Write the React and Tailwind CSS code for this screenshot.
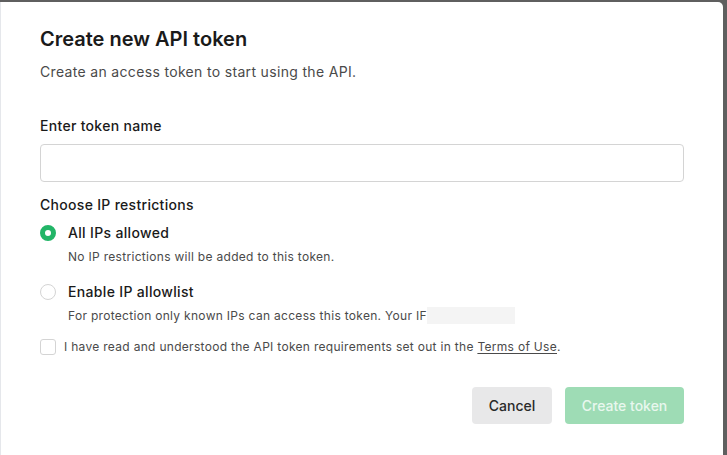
export default function App() {
  return (
    <div className="w-[727px] h-[455px] bg-[#5f5f5f] pt-[2px] pr-[4px] overflow-hidden" style={{ fontFamily: 'Inter, "Noto Sans", sans-serif' }}>
      <div className="h-full bg-white rounded-tr-[5px] border-l border-gray-200 pl-[39px] pr-[39px] pt-[25px] text-[#1a1a1a]">
        {/* Header */}
        <h1 className="text-[20px] leading-[24px] font-semibold">Create new API token</h1>
        <p className="mt-[11px] text-[14px] leading-[20px] tracking-[0.33px] text-[#4a4a4a]">Create an access token to start using the API.</p>

        {/* Token name */}
        <label className="block mt-[34px] text-[14px] leading-[20px] tracking-[0.3px] font-medium">Enter token name</label>
        <input type="text" className="mt-[8px] block w-full h-[38px] rounded-[4px] border border-[#d4d4d4] px-3 text-[14px] outline-none" />

        {/* IP restrictions */}
        <div className="mt-[13px] text-[14px] leading-[20px] tracking-[0.3px] font-medium">Choose IP restrictions</div>

        <div className="mt-[8px] flex items-start gap-[12px]">
          <span className="mt-[2px] w-[16px] h-[16px] rounded-full border-[5px] border-[#22b567] bg-white shrink-0" />
          <div>
            <div className="text-[14px] leading-[20px] tracking-[0.33px] font-medium">All IPs allowed</div>
            <div className="mt-[6px] text-[12px] leading-[16px] tracking-[0.3px] text-[#4a4a4a]">No IP restrictions will be added to this token.</div>
          </div>
        </div>

        <div className="mt-[17px] flex items-start gap-[12px]">
          <span className="mt-[2px] w-[16px] h-[16px] rounded-full border border-[#d4d4d4] bg-white shrink-0" />
          <div>
            <div className="text-[14px] leading-[20px] tracking-[0.33px] font-medium">Enable IP allowlist</div>
            <div className="mt-[5px] flex items-center text-[12px] leading-[16px] tracking-[0.3px] text-[#4a4a4a]">
              <span>For protection only known IPs can access this token. Your IF</span>
              <span className="w-[88px] h-[17px] bg-[#f4f4f4]" />
            </div>
          </div>
        </div>

        {/* Terms */}
        <div className="mt-[15px] flex items-center gap-[8px]">
          <span className="w-[16px] h-[16px] rounded-[3px] border border-[#d4d4d4] bg-white shrink-0" />
          <span className="text-[12px] leading-[16px] tracking-[0.3px] text-[#4a4a4a]">
            I have read and understood the API token requirements set out in the <span className="underline underline-offset-2">Terms of Use</span>.
          </span>
        </div>

        {/* Actions */}
        <div className="mt-[32px] flex justify-end gap-[13px]">
          <button className="w-[80px] h-[37px] rounded-[4px] bg-[#e8e8e9] text-[14px] font-medium text-[#2a2a2a]">Cancel</button>
          <button className="w-[119px] h-[37px] rounded-[4px] bg-[#9edcb5] text-[14px] font-medium text-[#e8f7ee]">Create token</button>
        </div>
      </div>
    </div>
  );
}
